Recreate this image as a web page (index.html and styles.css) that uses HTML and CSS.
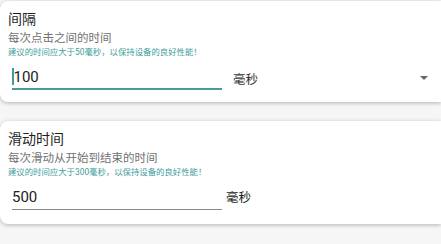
FILE: index.html
```html
<!DOCTYPE html>
<html lang="zh-CN">

<head>
    <meta charset="UTF-8">
    <meta name="viewport" content="width=device-width, initial-scale=1.0">
    <title>设置</title>
    <link rel="stylesheet" href="styles.css">
</head>

<body>
    <div class="settings">
        <div class="card card-interval">
            <div class="card-title">间隔</div>
            <div class="card-desc">每次点击之间的时间</div>
            <div class="card-hint">建议的时间应大于50毫秒，以保持设备的良好性能！</div>
            <div class="input-row">
                <div class="field focused"><span class="caret"></span>100</div>
                <div class="unit-select">
                    <span>毫秒</span>
                    <span class="arrow"></span>
                </div>
            </div>
        </div>
        <div class="card card-swipe">
            <div class="card-title">滑动时间</div>
            <div class="card-desc">每次滑动从开始到结束的时间</div>
            <div class="card-hint">建议的时间应大于300毫秒，以保持设备的良好性能！</div>
            <div class="input-row">
                <div class="field">500</div>
                <div class="unit">毫秒</div>
            </div>
        </div>
    </div>
</body>

</html>
```

FILE: styles.css
```css
body {
    font-family: Roboto, "Noto Sans CJK SC", sans-serif;
    background-color: #f6f6f6;
    margin: 0;
    overflow: hidden;
}

.settings {
    padding-top: 1px;
}

.card {
    background: #fff;
    border-radius: 8px 0 0 8px;
    box-shadow: 0 1px 4px rgba(0, 0, 0, 0.28);
    padding: 9px 8px 12px 8px;
    margin-bottom: 19px;
}

.card-swipe {
    padding-bottom: 14px;
}

.card-title {
    font-size: 14px;
    line-height: 18px;
    color: #1f1f1f;
}

.card-desc {
    font-size: 11.5px;
    line-height: 15px;
    color: #717171;
    margin-top: 3px;
}

.card-hint {
    font-size: 8.4px;
    line-height: 10px;
    color: #3f9c9c;
    margin-top: 1px;
}

.input-row {
    display: flex;
    align-items: flex-end;
    margin-top: 8px;
    padding-left: 4px;
}

.field {
    width: 210px;
    height: 24px;
    line-height: 24px;
    font-size: 15px;
    color: #222;
    border-bottom: 1px solid #8a8a8a;
    display: flex;
    align-items: center;
}

.field.focused {
    border-bottom: 2px solid #4a9a98;
    height: 23px;
}

.caret {
    width: 1.5px;
    height: 17px;
    background: #3f9c9c;
}

.unit-select {
    display: flex;
    align-items: center;
    justify-content: space-between;
    width: 195px;
    margin-left: 11px;
    height: 24px;
    font-size: 12.5px;
    color: #333;
}

.arrow {
    width: 0;
    height: 0;
    border-left: 4px solid transparent;
    border-right: 4px solid transparent;
    border-top: 4px solid #666;
}

.unit {
    margin-left: 4px;
    height: 24px;
    line-height: 24px;
    font-size: 12.5px;
    color: #222;
}
```
